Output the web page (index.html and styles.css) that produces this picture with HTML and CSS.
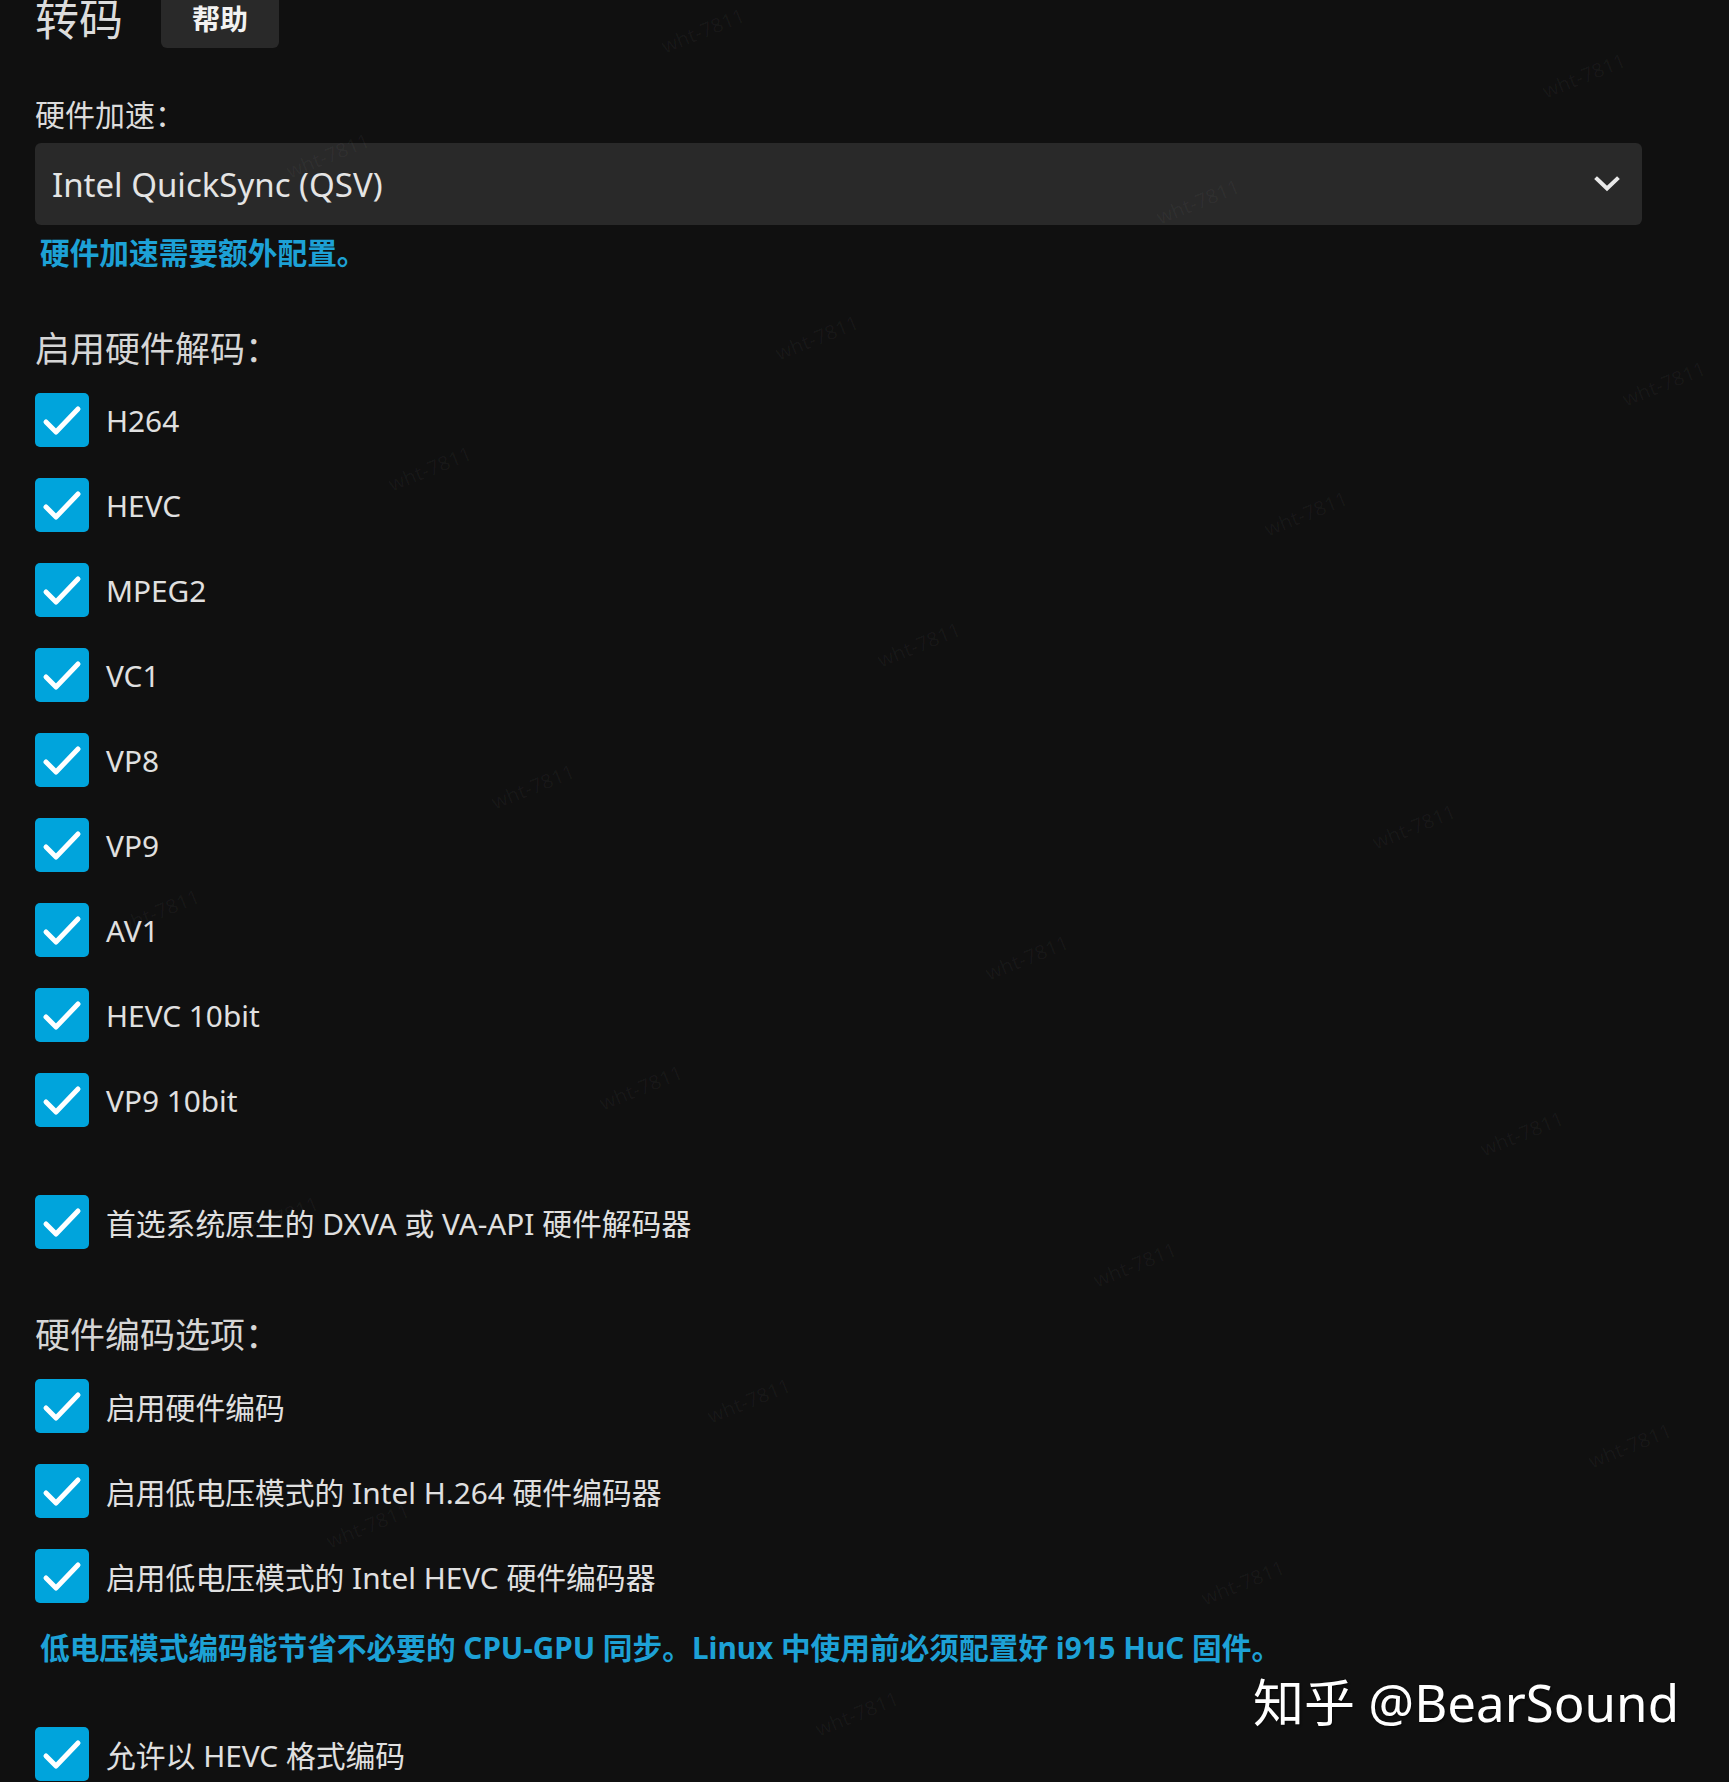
FILE: index.html
```html
<!DOCTYPE html>
<html lang="zh-CN">
<head>
<meta charset="utf-8">
<title>转码</title>
<link rel="stylesheet" href="styles.css">
</head>
<body>
<div class="page">
  <div class="header">
    <h1 class="title">转码</h1>
    <button class="help-btn">帮助</button>
  </div>

  <div class="field-label">硬件加速：</div>
  <div class="select">
    <span class="select-text">Intel QuickSync (QSV)</span>
    <svg class="chevron" width="26" height="16" viewBox="0 0 26 16"><polyline points="3,3 13,12.5 23,3" fill="none" stroke="#e8e8e8" stroke-width="4" stroke-linecap="square"/></svg>
  </div>
  <div class="note note-first">硬件加速需要额外配置。</div>

  <h2 class="section-heading heading-decode">启用硬件解码：</h2>
  <div class="check-list list-decode">
    <div class="check-row"><span class="box"><svg viewBox="0 0 54 54"><polyline points="11,29 21,39 43,16"/></svg></span><span class="check-label">H264</span></div>
    <div class="check-row"><span class="box"><svg viewBox="0 0 54 54"><polyline points="11,29 21,39 43,16"/></svg></span><span class="check-label">HEVC</span></div>
    <div class="check-row"><span class="box"><svg viewBox="0 0 54 54"><polyline points="11,29 21,39 43,16"/></svg></span><span class="check-label">MPEG2</span></div>
    <div class="check-row"><span class="box"><svg viewBox="0 0 54 54"><polyline points="11,29 21,39 43,16"/></svg></span><span class="check-label">VC1</span></div>
    <div class="check-row"><span class="box"><svg viewBox="0 0 54 54"><polyline points="11,29 21,39 43,16"/></svg></span><span class="check-label">VP8</span></div>
    <div class="check-row"><span class="box"><svg viewBox="0 0 54 54"><polyline points="11,29 21,39 43,16"/></svg></span><span class="check-label">VP9</span></div>
    <div class="check-row"><span class="box"><svg viewBox="0 0 54 54"><polyline points="11,29 21,39 43,16"/></svg></span><span class="check-label">AV1</span></div>
    <div class="check-row"><span class="box"><svg viewBox="0 0 54 54"><polyline points="11,29 21,39 43,16"/></svg></span><span class="check-label">HEVC 10bit</span></div>
    <div class="check-row"><span class="box"><svg viewBox="0 0 54 54"><polyline points="11,29 21,39 43,16"/></svg></span><span class="check-label">VP9 10bit</span></div>
  </div>

  <div class="check-row row-dxva"><span class="box"><svg viewBox="0 0 54 54"><polyline points="11,29 21,39 43,16"/></svg></span><span class="check-label">首选系统原生的 DXVA 或 VA-API 硬件解码器</span></div>

  <h2 class="section-heading heading-encode">硬件编码选项：</h2>
  <div class="check-list list-encode">
    <div class="check-row"><span class="box"><svg viewBox="0 0 54 54"><polyline points="11,29 21,39 43,16"/></svg></span><span class="check-label">启用硬件编码</span></div>
    <div class="check-row"><span class="box"><svg viewBox="0 0 54 54"><polyline points="11,29 21,39 43,16"/></svg></span><span class="check-label">启用低电压模式的 Intel H.264 硬件编码器</span></div>
    <div class="check-row"><span class="box"><svg viewBox="0 0 54 54"><polyline points="11,29 21,39 43,16"/></svg></span><span class="check-label">启用低电压模式的 Intel HEVC 硬件编码器</span></div>
  </div>
  <div class="note note-lowpower">低电压模式编码能节省不必要的 CPU-GPU 同步。Linux 中使用前必须配置好 i915 HuC 固件。</div>

  <div class="check-row row-last"><span class="box"><svg viewBox="0 0 54 54"><polyline points="11,29 21,39 43,16"/></svg></span><span class="check-label">允许以 HEVC 格式编码</span></div>
</div>

<div class="wm" style="left:659px;top:17px">wht-7811</div>
<div class="wm" style="left:1540px;top:62px">wht-7811</div>
<div class="wm" style="left:284px;top:142px">wht-7811</div>
<div class="wm" style="left:1154px;top:188px">wht-7811</div>
<div class="wm" style="left:773px;top:324px">wht-7811</div>
<div class="wm" style="left:1620px;top:370px">wht-7811</div>
<div class="wm" style="left:386px;top:455px">wht-7811</div>
<div class="wm" style="left:1262px;top:500px">wht-7811</div>
<div class="wm" style="left:875px;top:631px">wht-7811</div>
<div class="wm" style="left:489px;top:773px">wht-7811</div>
<div class="wm" style="left:1370px;top:813px">wht-7811</div>
<div class="wm" style="left:114px;top:898px">wht-7811</div>
<div class="wm" style="left:983px;top:944px">wht-7811</div>
<div class="wm" style="left:597px;top:1074px">wht-7811</div>
<div class="wm" style="left:1478px;top:1120px">wht-7811</div>
<div class="wm" style="left:233px;top:1205px">wht-7811</div>
<div class="wm" style="left:1091px;top:1251px">wht-7811</div>
<div class="wm" style="left:705px;top:1387px">wht-7811</div>
<div class="wm" style="left:1586px;top:1432px">wht-7811</div>
<div class="wm" style="left:324px;top:1512px">wht-7811</div>
<div class="wm" style="left:1199px;top:1569px">wht-7811</div>
<div class="wm" style="left:813px;top:1700px">wht-7811</div>

<div class="brand">知乎 @BearSound</div>
</body>
</html>
```

FILE: styles.css
```css
* { box-sizing: border-box; }

html, body {
  margin: 0;
  padding: 0;
  background: #101010;
}

body {
  width: 1729px;
  height: 1782px;
  overflow: hidden;
  position: relative;
  font-family: "Noto Sans", "Noto Sans CJK SC", sans-serif;
  color: #e0e0e0;
}

.page {
  padding-left: 35px;
  width: 1642px;
  display: flex;
  flex-direction: column;
}

.header {
  display: flex;
  align-items: center;
  height: 58px;
  margin-top: -10px;
}

.title {
  margin: 0;
  font-size: 44px;
  line-height: 58px;
  font-weight: 400;
  color: #dcdcdc;
}

.help-btn {
  margin-left: 38px;
  height: 58px;
  padding: 0 31px;
  border: 0;
  border-radius: 6px;
  background: #292929;
  color: #f2f2f2;
  font-family: "Noto Sans", "Noto Sans CJK SC", sans-serif;
  font-size: 28px;
  font-weight: 700;
  line-height: 58px;
}

.field-label {
  margin-top: 47px;
  font-size: 30px;
  line-height: 40px;
  color: #dcdcdc;
}

.select {
  margin-top: 8px;
  height: 82px;
  background: #292929;
  border-radius: 6px;
  display: flex;
  align-items: center;
  justify-content: space-between;
  padding: 0 22px 0 17px;
}

.select-text {
  font-size: 33px;
  color: #e4e4e4;
}

.chevron {
  display: block;
}

.note {
  color: #1da1d6;
  font-weight: 700;
  font-size: 29.7px;
  line-height: 40px;
  padding-left: 5px;
}

.note-first {
  margin-top: 8px;
}

.section-heading {
  margin: 0;
  font-weight: 400;
  font-size: 35px;
  line-height: 44px;
  color: #d6d6d6;
}

.heading-decode {
  margin-top: 54px;
}

.check-list {
  display: flex;
  flex-direction: column;
  gap: 31px;
}

.list-decode {
  margin-top: 22px;
}

.check-row {
  display: flex;
  align-items: center;
  height: 54px;
  gap: 17px;
}

.box {
  width: 54px;
  height: 54px;
  flex: none;
  background: #00a4dc;
  border-radius: 5px;
  display: block;
}

.box svg {
  display: block;
  width: 54px;
  height: 54px;
}

.box polyline {
  fill: none;
  stroke: #ffffff;
  stroke-width: 5;
  stroke-linecap: round;
  stroke-linejoin: round;
}

.check-label {
  font-size: 29.8px;
  color: #e0e0e0;
  white-space: nowrap;
}

.row-dxva {
  margin-top: 68px;
}

.heading-encode {
  margin-top: 64px;
}

.list-encode {
  margin-top: 22px;
}

.note-lowpower {
  margin-top: 25px;
}

.row-last {
  margin-top: 59px;
}

.wm {
  position: absolute;
  font-family: "Noto Sans", sans-serif;
  font-size: 20px;
  color: rgba(255, 255, 255, 0.04);
  transform: rotate(-22deg);
  white-space: nowrap;
  pointer-events: none;
}

.brand {
  position: absolute;
  right: 50px;
  top: 1667px;
  font-family: "Noto Sans", "Noto Sans CJK SC", sans-serif;
  font-size: 51px;
  line-height: 70px;
  color: #ffffff;
  text-shadow: 1px 1px 2px rgba(0, 0, 0, 0.6);
  white-space: nowrap;
}
```
